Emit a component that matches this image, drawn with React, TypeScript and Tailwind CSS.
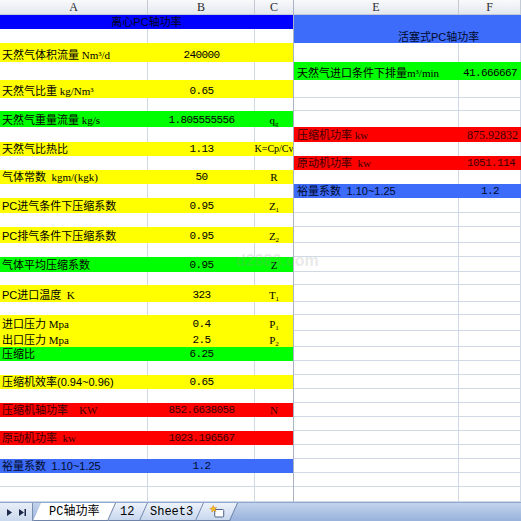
import React from "react";

type Node = React.ReactNode;

const H: Record<number, string> = {
  13: "h-[13px]",
  14: "h-[14px]",
  15: "h-[15px]",
  16: "h-[16px]",
  17: "h-[17px]",
  18: "h-[18px]",
  19: "h-[19px]",
  28: "h-[28px]",
};

const YEL = "bg-[#ffff00] text-black";
const GRN = "bg-[#00ff00] text-black";
const RED = "bg-[#ff0000] text-[#3a0000]";
const BLU = "bg-[#0000ff] text-[#00001a]";
const BL2 = "bg-[#3d6cfa] text-[#000a2a]";

const heights = [
  14, 14, 19, 18, 18, 13, 16, 15, 14, 14, 14, 14, 15, 14, 16, 14, 15, 13, 17, 13, 16, 16,
  14, 14, 14, 14, 14, 14, 14, 14, 14, 14, 15,
];

const Num = ({ children }: { children: Node }) => (
  <span className="font-['Liberation_Mono',monospace] text-[11px] tracking-[-0.6px]">{children}</span>
);
const Sans = ({ children }: { children: Node }) => (
  <span className="font-['Liberation_Sans','Noto_Sans_CJK_SC',sans-serif]">{children}</span>
);
const Sub = ({ children }: { children: Node }) => <sub className="text-[7px]">{children}</sub>;

type LRow = { bg: string; title?: Node; a?: Node; b?: Node; c?: Node };

const left: Record<number, LRow> = {
  0: { bg: BLU, title: <>离心<Sans>PC</Sans>轴功率</> },
  2: { bg: YEL, a: <>天然气体积流量 Nm³/d</>, b: "240000" },
  4: { bg: YEL, a: <>天然气比重 kg/Nm³</>, b: "0.65" },
  6: { bg: GRN, a: <>天然气重量流量 kg/s</>, b: "1.805555556", c: <>q<Sub>g</Sub></> },
  8: { bg: YEL, a: "天然气比热比", b: "1.13", c: <span className="text-[10px]">K=Cp/Cv</span> },
  10: { bg: YEL, a: "气体常数  kgm/(kgk)", b: "50", c: "R" },
  12: { bg: YEL, a: <><Sans>PC</Sans>进气条件下压缩系数</>, b: "0.95", c: <>Z<Sub>1</Sub></> },
  14: { bg: YEL, a: <><Sans>PC</Sans>排气条件下压缩系数</>, b: "0.95", c: <>Z<Sub>2</Sub></> },
  16: { bg: GRN, a: "气体平均压缩系数", b: "0.95", c: "Z" },
  18: { bg: YEL, a: <><Sans>PC</Sans>进口温度  K</>, b: "323", c: <>T<Sub>1</Sub></> },
  20: { bg: YEL, a: "进口压力 Mpa", b: "0.4", c: <>P<Sub>1</Sub></> },
  21: { bg: YEL, a: "出口压力 Mpa", b: "2.5", c: <>P<Sub>2</Sub></> },
  22: { bg: GRN, a: "压缩比", b: "6.25" },
  24: { bg: YEL, a: <>压缩机效率<Sans>(0.94~0.96)</Sans></>, b: "0.65" },
  26: { bg: RED, a: "压缩机轴功率    KW", b: "852.6638058", c: "N" },
  28: { bg: RED, a: "原动机功率  kw", b: "1023.196567" },
  30: { bg: BL2, a: <>裕量系数  <Sans>1.10~1.25</Sans></>, b: "1.2" },
};

type RRow = { bg: string; e: Node; f: Node; fCls: string };

const right: Record<number, RRow> = {
  3: { bg: GRN, e: <>天然气进口条件下排量m³/min</>, f: <Num>41.666667</Num>, fCls: "justify-end pr-[4px]" },
  7: {
    bg: RED,
    e: "压缩机功率 kw",
    f: <span className="font-['Liberation_Serif',serif] text-[12px]">875.92832</span>,
    fCls: "justify-end pr-[3px]",
  },
  9: { bg: RED, e: "原动机功率  kw", f: <Num>1051.114</Num>, fCls: "justify-end pr-[6px]" },
  11: { bg: BL2, e: <>裕量系数  <Sans>1.10~1.25</Sans></>, f: <Num>1.2</Num>, fCls: "justify-center" },
};

const TXT =
  "font-['Liberation_Serif','Noto_Sans_CJK_SC',serif] text-[11px] leading-[12px] whitespace-pre";

function LeftRow({ i }: { i: number }) {
  const r = left[i];
  const hc = H[heights[i]];
  if (!r) {
    const lineB = !left[i + 1];
    const b = lineB ? "border-b" : "";
    return (
      <div className={`${hc} flex`}>
        <div className={`w-[148px] border-r border-[#d0d7e5] ${b}`} />
        <div className={`w-[107px] border-r border-[#d0d7e5] ${b}`} />
        <div className={`w-[38px] border-[#d0d7e5] ${b}`} />
      </div>
    );
  }
  if (r.title) {
    return (
      <div className={`${hc} ${r.bg} ${TXT} flex items-end justify-center pb-[1px]`}>
        <span>{r.title}</span>
      </div>
    );
  }
  return (
    <div className={`${hc} ${r.bg} ${TXT} flex items-end pb-[1px]`}>
      <div className="w-[148px] pl-[2px]">{r.a}</div>
      <div className="w-[107px] flex justify-center">
        <Num>{r.b}</Num>
      </div>
      <div className="w-[38px] flex justify-center">
        <span>{r.c}</span>
      </div>
    </div>
  );
}

function RightRow({ i }: { i: number }) {
  const r = right[i];
  const hc = H[heights[i]];
  if (!r) {
    const lineB = !right[i + 1];
    const b = lineB ? "border-b" : "";
    return (
      <div className={`${hc} flex`}>
        <div className={`w-[165px] border-r border-[#d0d7e5] ${b}`} />
        <div className={`w-[62px] border-r border-[#d0d7e5] ${b}`} />
      </div>
    );
  }
  return (
    <div className={`${hc} ${r.bg} ${TXT} flex items-end pb-[1px]`}>
      <div className="w-[165px] pl-[3px]">{r.e}</div>
      <div className={`w-[62px] flex ${r.fCls}`}>
        <span>{r.f}</span>
      </div>
    </div>
  );
}

const HEAD =
  "h-[15px] flex bg-linear-to-b from-[#f9fafc] to-[#e3e7ee] border-b border-[#c3cad4] font-['Liberation_Serif',serif] text-[12px] leading-[14px] text-[#2b2b2b]";

function Tab({ w, active, children }: { w: string; active?: boolean; children: Node }) {
  return (
    <div
      className={`${w} h-[18px] flex items-center justify-center skew-x-[-24deg] border-r border-b border-[#6f84a8] ${
        active ? "bg-white relative z-10" : "bg-linear-to-b from-[#eef3fb] to-[#c8d7ee]"
      }`}
    >
      <span className="inline-block skew-x-[24deg] font-['Liberation_Mono','Noto_Sans_CJK_SC',monospace] text-[12px] leading-[14px] text-black whitespace-nowrap">
        {children}
      </span>
    </div>
  );
}

export default function App() {
  const idx = heights.map((_, i) => i);
  return (
    <div className="w-[521px] h-[521px] overflow-hidden bg-white flex flex-col relative">
      <div className="flex h-[502px]">
        {/* left pane */}
        <div className="w-[293px] flex flex-col">
          <div className={HEAD}>
            <div className="w-[148px] text-center border-r border-[#c3cad4]">A</div>
            <div className="w-[107px] text-center border-r border-[#c3cad4]">B</div>
            <div className="w-[38px] text-center">C</div>
          </div>
          {idx.map((i) => (
            <LeftRow key={i} i={i} />
          ))}
        </div>
        {/* split divider */}
        <div className="w-[1px] bg-[#a9b3c2]" />
        {/* right pane */}
        <div className="w-[227px] flex flex-col">
          <div className={HEAD}>
            <div className="w-[165px] text-center border-r border-[#c3cad4]">E</div>
            <div className="w-[62px] text-center border-r border-[#c3cad4]">F</div>
          </div>
          <div className={`h-[28px] ${BL2} ${TXT} flex items-end pl-[104px] pb-0`}>
            <span>
              活塞式<Sans>PC</Sans>轴功率
            </span>
          </div>
          {idx.slice(2).map((i) => (
            <RightRow key={i} i={i} />
          ))}
        </div>
      </div>

      {/* sheet tab bar */}
      <div className="h-[19px] flex border-t border-[#8da8d1] bg-linear-to-b from-[#c3d3ec] to-[#98b2dc]">
        <div className="w-[33px] h-full flex items-center pl-[7px] gap-[7px] border-r border-[#7d8fae] bg-linear-to-b from-[#e8eef8] to-[#cbd9ee]">
          <svg width="5" height="7" viewBox="0 0 5 7">
            <path d="M0 0 L5 3.5 L0 7Z" fill="#1b2a48" />
          </svg>
          <svg width="7" height="7" viewBox="0 0 7 7">
            <path d="M0 0 L5 3.5 L0 7Z" fill="#1b2a48" />
            <rect x="5.5" y="0" width="1.5" height="7" fill="#1b2a48" />
          </svg>
        </div>
        <div className="flex h-full ml-[4px]">
          <Tab w="w-[75px]" active>
            PC轴功率
          </Tab>
          <Tab w="w-[32px]">12</Tab>
          <Tab w="w-[56px]">Sheet3</Tab>
          <Tab w="w-[34px]">
            <svg width="16" height="13" viewBox="0 0 16 13" className="block">
              <rect x="5.5" y="4.5" width="9" height="7.5" rx="1" fill="#ffffff" stroke="#4d6288" />
              <path
                d="M4 0.5 L4.9 2.8 L7.4 2.5 L5.6 4.2 L6.8 6.4 L4.5 5.4 L2.6 7 L2.8 4.6 L0.6 3.5 L3 2.8 Z"
                fill="#f6c22a"
                stroke="#d98a12"
                strokeWidth="0.6"
              />
            </svg>
          </Tab>
        </div>
      </div>

      {/* faint watermark */}
      <div className="absolute left-[236px] top-[249px] pointer-events-none font-['Liberation_Sans',sans-serif] font-bold text-[16px] text-[rgba(150,150,150,0.22)]">
        d2888.com
      </div>
    </div>
  );
}
